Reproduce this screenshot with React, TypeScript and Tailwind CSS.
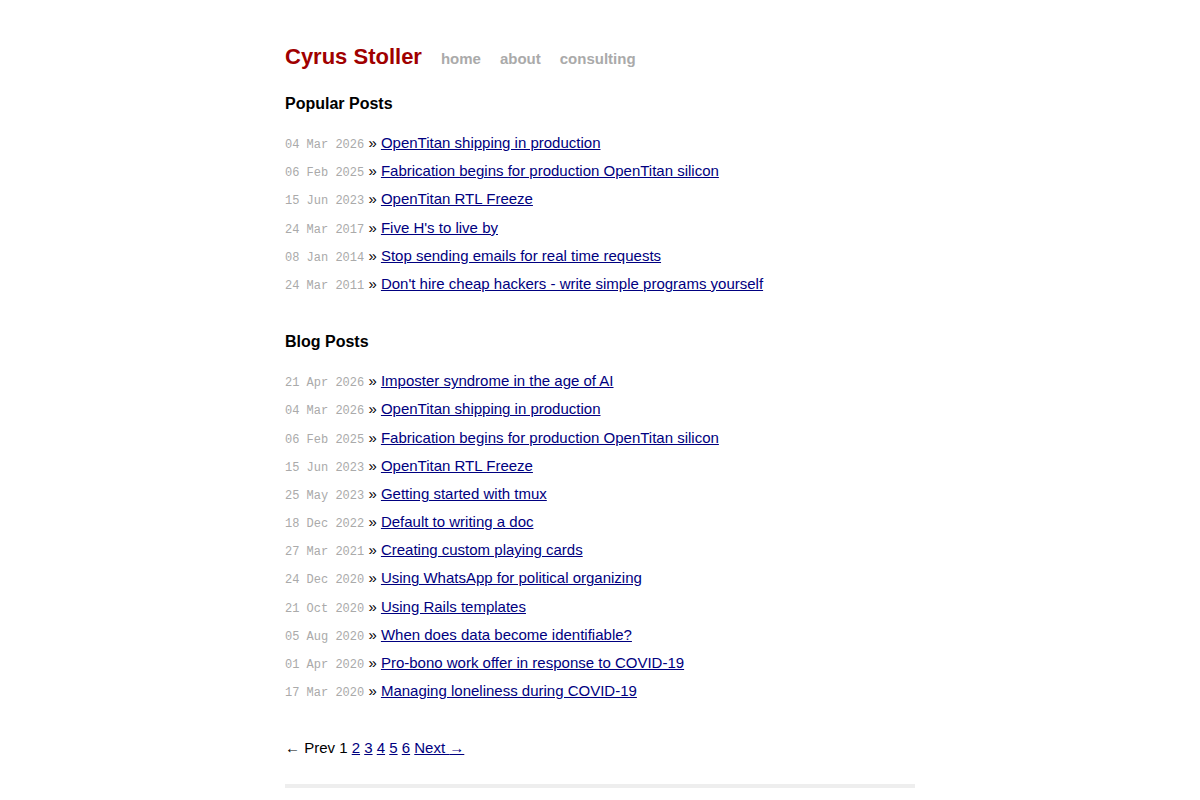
const popular = [
  ['04 Mar 2026', 'OpenTitan shipping in production'],
  ['06 Feb 2025', 'Fabrication begins for production OpenTitan silicon'],
  ['15 Jun 2023', 'OpenTitan RTL Freeze'],
  ['24 Mar 2017', "Five H's to live by"],
  ['08 Jan 2014', 'Stop sending emails for real time requests'],
  ['24 Mar 2011', "Don't hire cheap hackers - write simple programs yourself"],
];

const posts = [
  ['21 Apr 2026', 'Imposter syndrome in the age of AI'],
  ['04 Mar 2026', 'OpenTitan shipping in production'],
  ['06 Feb 2025', 'Fabrication begins for production OpenTitan silicon'],
  ['15 Jun 2023', 'OpenTitan RTL Freeze'],
  ['25 May 2023', 'Getting started with tmux'],
  ['18 Dec 2022', 'Default to writing a doc'],
  ['27 Mar 2021', 'Creating custom playing cards'],
  ['24 Dec 2020', 'Using WhatsApp for political organizing'],
  ['21 Oct 2020', 'Using Rails templates'],
  ['05 Aug 2020', 'When does data become identifiable?'],
  ['01 Apr 2020', 'Pro-bono work offer in response to COVID-19'],
  ['17 Mar 2020', 'Managing loneliness during COVID-19'],
];

function PostList({ items }: { items: string[][] }) {
  return (
    <ul>
      {items.map(([date, title]) => (
        <li key={date + title} className="h-[28.2px] leading-[28.2px] text-[15px] text-black">
          <span className="leading-none font-['Liberation_Mono',monospace] text-[12px] text-[#aaa]">{date}</span>{' '}
          &raquo;{' '}
          <a href="#" className="leading-none text-[#000080] underline">
            {title}
          </a>
        </li>
      ))}
    </ul>
  );
}

export default function App() {
  return (
    <div className="min-h-screen bg-white font-['Liberation_Sans',Arial,sans-serif]">
      <div className="w-[630px] mx-auto pt-[42px]">
        <header className="flex items-baseline gap-[19px] h-[30px]">
          <a href="#" className="text-[22px] font-bold text-[#a00000] leading-[30px]">
            Cyrus Stoller
          </a>
          <nav className="flex gap-[19px] text-[15px] font-bold text-[#aaa]">
            <a href="#">home</a>
            <a href="#">about</a>
            <a href="#">consulting</a>
          </nav>
        </header>

        <h2 className="mt-[21px] text-[16px] font-bold leading-[22px] text-black">Popular Posts</h2>
        <div className="mt-[14px]">
          <PostList items={popular} />
        </div>

        <h2 className="mt-[33px] text-[16px] font-bold leading-[22px] text-black">Blog Posts</h2>
        <div className="mt-[14px]">
          <PostList items={posts} />
        </div>

        <div className="mt-[29px] h-[28px] leading-[28px] text-[15px] text-black">
          <span className="leading-none text-[15px]">&larr;</span> Prev 1{' '}
          {['2', '3', '4', '5', '6'].map((n) => (
            <span key={n}>
              <a href="#" className="text-[#000080] underline">{n}</a>{' '}
            </span>
          ))}
          <a href="#" className="text-[#000080] underline">
            Next <span className="leading-none text-[15px]">&rarr;</span>
          </a>
        </div>

        <div className="mt-[22px] h-[4px] bg-[#eee]" />
      </div>
    </div>
  );
}
